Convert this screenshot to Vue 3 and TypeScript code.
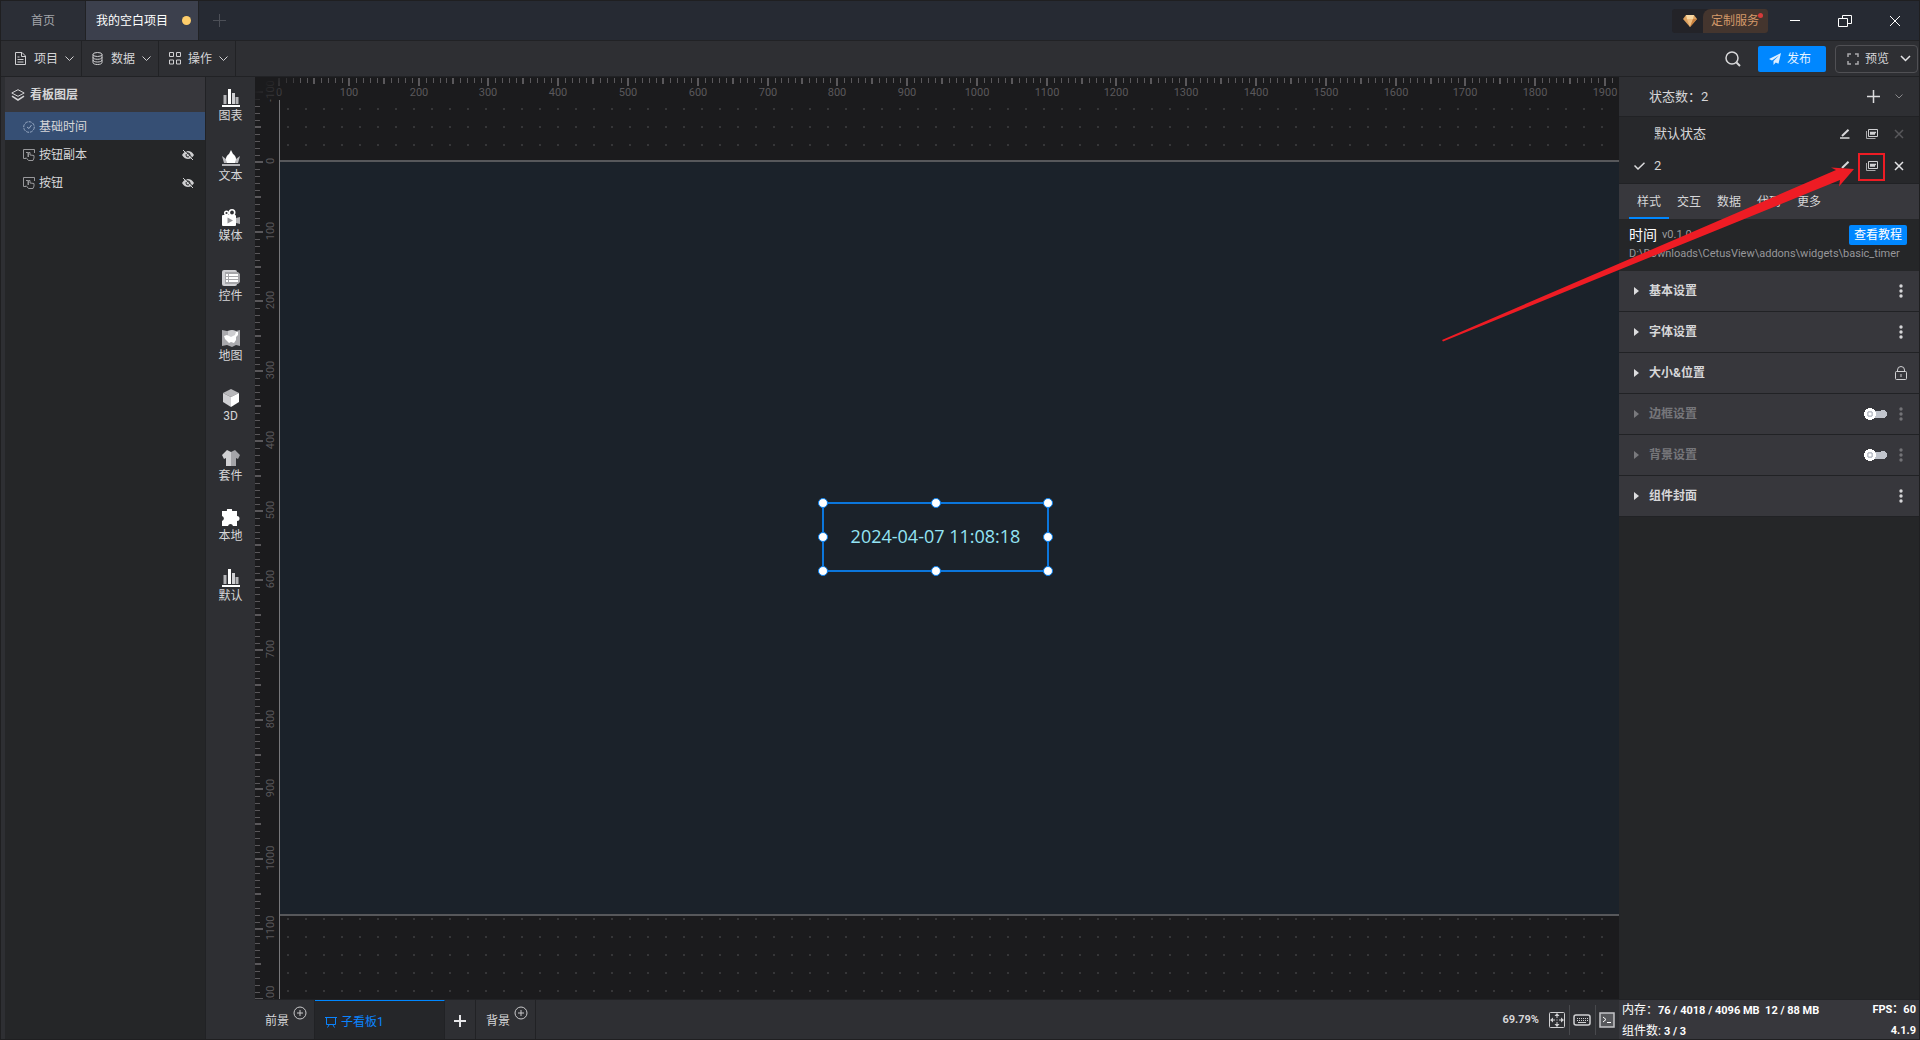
<script setup lang="ts">
import { ref } from 'vue'

interface Layer { name: string; icon: 'clock' | 'button'; hidden: boolean }
interface Tick { pos: number; value: number; level: number }
interface Section { title: string; off: boolean; toggle: boolean; lock: boolean }

function makeTicks(origin: number, scale: number, from: number, to: number): Tick[] {
  const list: Tick[] = []
  for (let v = from; v <= to; v += 10) {
    list.push({
      pos: Math.round(origin + v * scale),
      value: v,
      level: v % 100 === 0 ? 2 : v % 50 === 0 ? 1 : 0,
    })
  }
  return list
}

const xTicks = makeTicks(24, 0.6979, 0, 1920)
const yTicks = makeTicks(85, 0.6972, -100, 1200)
const tickLength = [5, 6, 8]
const tickWidth = [1, 2, 2]

const menus = ['项目', '数据', '操作']
const layers: Layer[] = [
  { name: '基础时间', icon: 'clock', hidden: false },
  { name: '按钮副本', icon: 'button', hidden: true },
  { name: '按钮', icon: 'button', hidden: true },
]
const tools = [
  { name: '图表', icon: 'chart' },
  { name: '文本', icon: 'crown' },
  { name: '媒体', icon: 'media' },
  { name: '控件', icon: 'control' },
  { name: '地图', icon: 'map' },
  { name: '3D', icon: 'cube' },
  { name: '套件', icon: 'shirt' },
  { name: '本地', icon: 'puzzle' },
  { name: '默认', icon: 'chart' },
]
const states = [
  { name: '默认状态', current: false },
  { name: '2', current: true },
]
const tabs = ['样式', '交互', '数据', '代码', '更多']
const activeTab = ref(0)
const sections: Section[] = [
  { title: '基本设置', off: false, toggle: false, lock: false },
  { title: '字体设置', off: false, toggle: false, lock: false },
  { title: '大小&位置', off: false, toggle: false, lock: true },
  { title: '边框设置', off: true, toggle: true, lock: false },
  { title: '背景设置', off: true, toggle: true, lock: false },
  { title: '组件封面', off: false, toggle: false, lock: false },
]
const handles = ['nw', 'n', 'ne', 'w', 'e', 'sw', 's', 'se']
</script>

<template>
  <div class="app">
    <header class="titlebar">
      <nav class="pages">
        <button class="page">首页</button>
        <button class="page current">我的空白项目<i class="unsaved"></i></button>
        <button class="new-page" aria-label="新建">
          <svg width="13" height="13"><path d="M6.500 0v13M0 6.500h13" stroke="#4c4f57" fill="none" /></svg>
        </button>
      </nav>
      <div class="window-tools">
        <button class="service">
          <span class="gem">
            <svg width="16" height="14" viewBox="0 0 16 14">
              <path d="M4 1h8l3 4-7 8-7-8z" fill="#dda15f" />
              <path d="M4 1h8l-1 4H5z" fill="#f8d7a2" />
              <path d="M5 5h6l-3 8z" fill="#efbd80" />
              <path d="M11 5h4l-7 8z" fill="#c7803f" />
            </svg>
          </span>
          <span class="service-text">定制服务</span>
          <i class="alert"></i>
        </button>
        <button class="win" aria-label="最小化"><svg width="16" height="16"><path d="M3 7.500h10" stroke="#fff" /></svg></button>
        <button class="win" aria-label="还原">
          <svg width="16" height="16" fill="none" stroke="#fff"><path d="M1.500 5.500h9v8h-9zM5.500 5V2.500h9v8h-4" /></svg>
        </button>
        <button class="win" aria-label="关闭"><svg width="16" height="16"><path d="M3 3l10 10M13 3L3 13" stroke="#fff" /></svg></button>
      </div>
    </header>

    <div class="toolbar">
      <button v-for="(m, i) in menus" :key="m" class="menu">
        <svg width="13" height="13" viewBox="0 0 13 13" fill="none" stroke="#d0d0d2">
          <path v-if="i === 0" d="M1.500 .5h6.500l3.500 3.500v8.500h-10zM7.500 .5v4h4M3.500 5h2M3.500 7.500h6M3.500 10h6" />
          <template v-else-if="i === 1">
            <ellipse cx="6.500" cy="2.500" rx="4.500" ry="2" />
            <path d="M2 2.500v8c0 1.200 2 2 4.500 2s4.500-.8 4.500-2v-8M2 5.300c0 1.200 2 2 4.500 2s4.500-.8 4.500-2M2 8c0 1.200 2 2 4.500 2s4.500-.8 4.500-2" />
          </template>
          <path v-else d="M1.500 .5h4v4h-4zM8.500 .5h4v4h-4zM1.500 8h4v4h-4zM8.500 8h4v4h-4z" />
        </svg>
        <span>{{ m }}</span>
        <svg width="9" height="6"><path d="M.5 .5l4 4 4-4" fill="none" stroke="#d0d0d2" /></svg>
      </button>
      <div class="actions">
        <button class="search" aria-label="搜索">
          <svg width="16" height="16" fill="none" stroke="#d8d8da" stroke-width="1.500"><circle cx="7" cy="7" r="6" /><path d="M11.500 11.500l3.500 3.500" stroke-width="2" /></svg>
        </button>
        <button class="publish">
          <svg width="12" height="12" viewBox="0 0 12 12"><path d="M12 0L0 6l3 1.400L10 2.500 4.500 8v4l2.200-2.600L9.500 10.700z" fill="#dceeff" /></svg>
          <span>发布</span>
        </button>
        <button class="preview">
          <svg width="12" height="12" fill="none" stroke="#a9a9ac" stroke-width="1.500"><path d="M1 4V1h3M8 1h3v3M11 8v3H8M4 11H1V8" /></svg>
          <span>预览</span>
          <svg width="11" height="7"><path d="M1 1l4.500 4.500L10 1" fill="none" stroke="#e4e4e6" stroke-width="1.500" /></svg>
        </button>
      </div>
    </div>

    <div class="body">
      <aside class="layers">
        <h2>
          <svg width="14" height="12" fill="none" stroke="#d4d4d6"><path d="M7 .7L.8 4 7 7.300 13.200 4z" /><path d="M1 7.200l6 3.800 6-3.800" stroke-width="1.500" /></svg>
          看板图层
        </h2>
        <ul>
          <li v-for="l in layers" :key="l.name" :class="{ selected: l.icon === 'clock' }">
            <svg v-if="l.icon === 'clock'" width="12" height="12" fill="none" stroke="#9aabc4"><circle cx="6" cy="6" r="5.300" stroke-dasharray="3 1" /><path d="M4 6l2 1.500L8.500 4" /></svg>
            <svg v-else width="12" height="12" fill="none" stroke="#98989b"><path d="M3 9.500H.5v-9h11V4M3 3.500h2v4.500M5.500 8V3.500h1.500V6l4 .5V9l-1 2.500H5.500L3 8.500" /></svg>
            <span>{{ l.name }}</span>
            <svg v-if="l.hidden" class="eye" width="12" height="12" viewBox="0 0 12 12"><path d="M0 6c2-3.500 4-4 6-4s4 .5 6 4c-2 3.500-4 4-6 4S2 9.500 0 6z" fill="#cfcfd1" /><circle cx="6" cy="6" r="2" fill="none" stroke="#252628" /><path d="M2.500 1l9 9" stroke="#252628" /><path d="M1 1l10 10" stroke="#cfcfd1" /></svg>
          </li>
        </ul>
      </aside>

      <nav class="tools">
        <button v-for="t in tools" :key="t.name" class="tool">
          <svg width="18" height="18" viewBox="0 0 18 18">
            <template v-if="t.icon === 'chart'">
              <path d="M1.500 6h3v9h-3zM13.500 8h3v7h-3z" fill="#b4b4b7" /><path d="M6 0h3v15H6z" fill="#fff" /><path d="M10 4h3v11h-3z" fill="#d0d0d3" /><path d="M0 16h18v2H0z" fill="#fff" />
            </template>
            <template v-else-if="t.icon === 'crown'">
              <path d="M0 7l4 3 1 4H2zM18 7l-4 3-1 4h3z" fill="#bdbdc0" /><path d="M9 1l2 4c3 2 4 5 2 9H5C3 10 4 7 7 5z" fill="#fff" /><path d="M0 15h18v2H0z" fill="#b4b4b7" />
            </template>
            <template v-else-if="t.icon === 'media'">
              <circle cx="4.500" cy="4" r="1.800" fill="none" stroke="#fff" stroke-width="1.500" /><circle cx="10" cy="3.500" r="2.700" fill="none" stroke="#fff" stroke-width="1.600" /><rect y="6" width="14" height="11" rx="1" fill="#fff" /><path d="M14 9l4-1v7l-4-1z" fill="#b4b4b7" /><path d="M5.500 8.500l5.500 3-5.500 3z" fill="#929295" />
            </template>
            <template v-else-if="t.icon === 'control'">
              <rect y="1" width="15" height="16" rx="2" fill="#cfcfd2" /><path d="M3 3h13l2 2v8l-2 2H3z" fill="#a7a7aa" /><path d="M4 5h2v2H4zM7 5h9v2H7zM4 8h2v2H4zM7 8h9v2H7zM4 11h2v2H4zM7 11h9v2H7z" fill="#fff" />
            </template>
            <template v-else-if="t.icon === 'map'">
              <path d="M0 1l5 1 5-1 4 1 4-1v16l-4-1-4 2-5-2-5 1z" fill="#a9a9ad" /><path d="M6 2l4-1 4 1v6H6z" fill="#cdcdd0" /><path d="M2 7l3-1 4 2 4-2 1-3 2 0v3l-2 2v3l-2 3-3-1-2 1-4-4z" fill="#fff" />
            </template>
            <template v-else-if="t.icon === 'cube'">
              <path d="M9 0l8 4-8 4-8-4z" fill="#b7b7ba" /><path d="M1 4l8 4v10l-8-5z" fill="#d0d0d3" /><path d="M17 4L9 8v10l8-5z" fill="#fff" />
            </template>
            <template v-else-if="t.icon === 'shirt'">
              <path d="M5 1l4 2v14H4V9L2 10 0 6z" fill="#d0d0d3" /><path d="M13 1L9 3v14h5V9l2 1 2-4z" fill="#a4a4a8" />
            </template>
            <path v-else d="M0 2h5a2.600 2.600 0 1 1 5 0h5v5a2.500 2.500 0 1 1 0 5v5h-4a2.600 2.600 0 0 0-5 0H0v-5a2.600 2.600 0 0 0 0-5z" fill="#fff" />
          </svg>
          <span>{{ t.name }}</span>
        </button>
      </nav>

      <main class="center">
        <div class="workspace">
          <svg class="ruler-x">
            <template v-for="t in xTicks" :key="t.value">
              <rect :x="t.level ? t.pos - 1 : t.pos" y="1" :width="tickWidth[t.level]" :height="tickLength[t.level]" />
              <text v-if="t.level === 2" :x="t.pos" y="19">{{ t.value }}</text>
            </template>
          </svg>
          <svg class="ruler-y">
            <template v-for="t in yTicks" :key="t.value">
              <rect x="0" :y="t.level ? t.pos - 1 : t.pos" :width="tickLength[t.level]" :height="tickWidth[t.level]" />
              <text v-if="t.level === 2" :transform="`translate(19 ${t.pos - 1}) rotate(-90)`">{{ t.value }}</text>
            </template>
          </svg>
          <div class="corner"></div>
          <div class="viewport">
            <div class="stage">
              <div class="widget">
                <span>2024-04-07 11:08:18</span>
                <i v-for="h in handles" :key="h" class="handle" :class="h"></i>
              </div>
            </div>
          </div>
        </div>

        <footer class="boards">
          <button class="board">前景
            <svg class="add" width="14" height="14" fill="none" stroke="#c9c9cb"><circle cx="7" cy="7" r="6" /><path d="M4 7h6M7 4v6" /></svg>
          </button>
          <button class="board active">
            <svg width="12" height="12" fill="none" stroke="#0a84ff"><path d="M0 1.500h12M1.500 1.500v7h9v-7M4 9l-1.500 2.500M8 9l1.500 2.500" /></svg>
            子看板1
          </button>
          <button class="board plus" aria-label="新建看板"><svg width="12" height="12"><path d="M6 0v12M0 6h12" stroke="#e6e6e8" stroke-width="2" /></svg></button>
          <button class="board">背景
            <svg class="add" width="14" height="14" fill="none" stroke="#c9c9cb"><circle cx="7" cy="7" r="6" /><path d="M4 7h6M7 4v6" /></svg>
          </button>
          <div class="view-tools">
            <span>69.79%</span>
            <button aria-label="适应画布">
              <svg width="16" height="16" fill="none" stroke="#d0d0d2"><rect x=".5" y=".5" width="15" height="15" rx="1" /><path d="M8 2v4M8 10v4M2 8h4M10 8h4M7.500 8h1" /><path d="M8 1l2.500 3h-5zM8 15l2.500-3h-5zM1 8l3-2.500v5zM15 8l-3-2.500v5z" fill="#d0d0d2" stroke="none" /></svg>
            </button>
            <button aria-label="快捷键">
              <svg width="18" height="12" fill="none" stroke="#d0d0d2"><rect x="1" y="1" width="16" height="10" rx="2" stroke-width="1.500" /><path d="M4 4.500h11M4 6.500h11" stroke-dasharray="1 1" /><path d="M5 8.500h8" /></svg>
            </button>
            <button aria-label="控制台">
              <svg width="16" height="16" fill="none" stroke="#c4c4c7"><rect x="1" y="1" width="14" height="14" fill="#57585c" stroke-width="1.500" /><path d="M4 5l3 2.500L4 10M8 10.500h4" stroke="#fff" /></svg>
            </button>
          </div>
        </footer>
      </main>

      <aside class="inspector">
        <div class="state-head">
          <span>状态数：2</span>
          <button aria-label="添加状态"><svg width="13" height="13"><path d="M6.500 0v13M0 6.500h13" stroke="#dcdcde" stroke-width="1.500" /></svg></button>
          <button aria-label="收起"><svg width="8" height="5"><path d="M.5 .5L4 4 7.500 .5" fill="none" stroke="#88888b" /></svg></button>
        </div>
        <ul class="states">
          <li v-for="s in states" :key="s.name">
            <svg class="tick" width="11" height="8"><path v-if="s.current" d="M.5 3.500l3.500 3.500L10.500 .8" fill="none" stroke="#dcdcde" stroke-width="1.500" /></svg>
            <span>{{ s.name }}</span>
            <button aria-label="重命名"><svg width="10" height="10" fill="none" stroke="#d8d8da"><path d="M2 7L8.500 .8" stroke-width="2" /><path d="M0 9h9.500" stroke-width="1.500" /></svg></button>
            <button aria-label="复制"><svg width="12" height="10" fill="none" stroke="#d0d0d2"><path d="M2.500 .5h9v7h-9z" /><path d="M.5 2v7.500h9" stroke="#a8a8ab" /><path d="M4 3.500h6M4 5h5" stroke-width="1.500" /></svg></button>
            <button aria-label="删除"><svg width="10" height="10" fill="none" :stroke="s.current ? '#e4e4e6' : '#58585b'" stroke-width="1.500"><path d="M1 1l8 8M9 1L1 9" /></svg></button>
          </li>
        </ul>
        <nav class="tabs">
          <button v-for="(t, i) in tabs" :key="t" :class="{ on: activeTab === i }" @click="activeTab = i">{{ t }}</button>
        </nav>
        <div class="info">
          <div class="info-line">
            <strong>时间</strong>
            <small>v0.1.0</small>
            <a href="#tutorial">查看教程</a>
          </div>
          <p>D:\Downloads\CetusView\addons\widgets\basic_timer</p>
        </div>
        <section v-for="s in sections" :key="s.title" class="section" :class="{ off: s.off }">
          <button class="fold">{{ s.title }}</button>
          <input v-if="s.toggle" type="checkbox" class="switch" :aria-label="s.title" />
          <svg v-if="s.lock" width="14" height="14" fill="none" stroke="#d0d0d2"><rect x="1.500" y="5.500" width="11" height="8" rx="1" /><path d="M3.500 5.500V4a3.500 3.500 0 0 1 7 0v1.500M7 8v3" /></svg>
          <svg v-else class="dots" width="4" height="14"><circle cx="2" cy="2" r="1.700" /><circle cx="2" cy="7" r="1.700" /><circle cx="2" cy="12" r="1.700" /></svg>
        </section>
        <footer class="status">
          <div><span>内存：<b>76 / 4018 / 4096 MB&nbsp; 12 / 88 MB</b></span><b>FPS：60</b></div>
          <div><span>组件数: <b>3 / 3</b></span><b>4.1.9</b></div>
        </footer>
      </aside>
    </div>

    <svg class="pointer" width="480" height="350" viewBox="0 0 480 350">
      <path d="M2 340L396 170 391 167.500 414 169 399 186.500 400 180 3 341.500z" fill="#ee1c24" />
      <rect x="419" y="154" width="25" height="26" fill="none" stroke="#ee1c24" stroke-width="2" />
    </svg>
  </div>
</template>

<style>
body {
  margin: 0;
  background: #1e1e20;
}
</style>

<style scoped>
.app {
  --line: #212225;
  position: relative;
  display: flex;
  flex-direction: column;
  box-sizing: border-box;
  height: 100vh;
  border: 1px solid #1f1f21;
  background: #2e2f33;
  color: #d6d6d8;
  font: 12px/16px Roboto, 'Noto Sans CJK SC', sans-serif;
  overflow: hidden;
}
button {
  display: flex;
  align-items: center;
  padding: 0;
  border: 0;
  background: none;
  color: inherit;
  font: inherit;
  white-space: nowrap;
}
ul {
  margin: 0;
  padding: 0;
  list-style: none;
}
svg {
  display: block;
  flex: none;
}

.titlebar {
  display: flex;
  justify-content: space-between;
  flex: none;
  height: 39px;
  border-bottom: 1px solid var(--line);
  background: #262a33;
}
.pages { display: flex; }
.page {
  padding: 0 30px;
  border-right: 1px solid var(--line);
  background: #2b2e36;
  color: #a3a5aa;
}
.page.current {
  padding: 0 7px 0 10px;
  background: #3c404d;
  color: #fff;
}
.unsaved {
  width: 9px;
  height: 9px;
  margin: 0 0 0 14px;
  border-radius: 50%;
  background: #ffce6b;
}
.new-page { margin-left: 14px; }
.window-tools {
  display: flex;
  align-items: center;
  gap: 34px;
  padding-right: 16px;
}
.service {
  position: relative;
  height: 24px;
  margin-right: -15px;
  border-radius: 3px;
  background: #232328;
  color: #d4996a;
}
.gem { width: 31px; padding-left: 10px; box-sizing: border-box; }
.service-text {
  padding: 4px 9px 4px 8px;
  border-radius: 8px 3px 3px 0;
  background: #44352e;
}
.alert {
  position: absolute;
  top: 4px;
  right: 5px;
  width: 5px;
  height: 5px;
  border-radius: 50%;
  background: #d63a3a;
}

.toolbar {
  display: flex;
  flex: none;
  height: 35px;
  padding-left: 4px;
  border-bottom: 1px solid var(--line);
}
.menu {
  gap: 7px;
  width: 77px;
  box-sizing: border-box;
  padding-left: 9px;
  border-right: 1px solid var(--line);
}
.actions {
  display: flex;
  align-items: center;
  margin-left: auto;
  padding-right: 1px;
}
.search { margin-right: 17px; }
.publish {
  gap: 6px;
  height: 26px;
  margin-right: 9px;
  padding: 0 15px 0 11px;
  border-radius: 2px;
  background: #0087ff;
  color: #e6f3ff;
}
.preview {
  gap: 6px;
  height: 28px;
  padding: 0 6px 0 11px;
  border: 1px solid #505054;
  border-radius: 4px;
}
.preview span { margin-right: 5px; }

.body {
  display: flex;
  flex: 1;
  min-height: 0;
  padding-left: 4px;
}
.layers {
  flex: none;
  width: 200px;
  border-right: 1px solid var(--line);
  background: #252628;
}
.layers h2 {
  display: flex;
  align-items: center;
  gap: 5px;
  height: 35px;
  margin: 0;
  padding-left: 6px;
  background: #37373c;
  font-size: 12px;
}
.layers li {
  display: flex;
  align-items: center;
  gap: 4px;
  height: 26px;
  padding: 2px 11px 0 18px;
}
.layers li.selected { background: #364f74; }
.eye { margin-left: auto; }

.tools {
  flex: none;
  width: 49px;
}
.tool {
  flex-direction: column;
  width: 100%;
  height: 60px;
  padding-top: 12px;
  gap: 1px;
}

.center {
  display: flex;
  flex: 1;
  flex-direction: column;
  min-width: 0;
}
.workspace {
  display: grid;
  flex: 1;
  grid-template: 23px minmax(0, 1fr) / 24px minmax(0, 1fr);
  min-height: 0;
  background: #1b1b1d;
  overflow: hidden;
}
.ruler-x,
.ruler-y {
  width: 100%;
  height: 100%;
  fill: #5a585b;
  font-size: 11px;
  text-anchor: middle;
  overflow: hidden;
}
.ruler-x { grid-area: 1 / 1 / 2 / 3; }
.ruler-y { grid-area: 1 / 1 / 3 / 2; }
.corner {
  z-index: 1;
  grid-area: 1 / 1;
  width: 44px;
  height: 23px;
  background: linear-gradient(135deg, #1b1b1d 20%, #1b1b1d00);
}
.viewport {
  grid-area: 2 / 2;
  padding-top: 60px;
  border-left: 1px solid #77777a;
  background: radial-gradient(circle, #363638 1px, #36363800 1px) -1px 0 / 18px 18px;
  overflow: hidden;
}
.stage {
  position: relative;
  height: 752px;
  border: solid #57585b;
  border-width: 2px 0;
  background: #1b222a;
}
.widget {
  position: absolute;
  top: 340px;
  left: 542px;
  display: flex;
  align-items: center;
  justify-content: center;
  box-sizing: border-box;
  width: 227px;
  height: 70px;
  padding-bottom: 2px;
  border: 2px solid #0b76dc;
  color: #94e4f4;
  font: 18px/24px 'Open Sans', sans-serif;
}
.handle {
  position: absolute;
  width: 8px;
  height: 8px;
  margin: -6px;
  border: 1px solid #0b82f0;
  border-radius: 50%;
  background: #fff;
}
.n, .nw, .ne { top: 0; }
.s, .sw, .se { top: 100%; margin-top: -4px; }
.w, .e { top: 50%; margin-top: -5px; }
.w, .nw, .sw { left: 0; }
.e, .ne, .se { left: 100%; margin-left: -4px; }
.n, .s { left: 50%; margin-left: -5px; }

.boards {
  display: flex;
  flex: none;
  height: 39px;
  border-top: 1px solid var(--line);
}
.board {
  gap: 4px;
  box-sizing: border-box;
  padding: 3px 7px 0 10px;
  border-right: 1px solid var(--line);
}
.board.active {
  width: 130px;
  border-top: 1px solid #0087ff;
  background: #252629;
  color: #0a84ff;
}
.board.plus { padding: 2px 9px 0; }
.add { margin-bottom: 16px; }
.view-tools {
  display: flex;
  align-items: center;
  gap: 3px;
  margin-left: auto;
}
.view-tools span {
  margin-right: 7px;
  font-size: 11px;
  font-weight: bold;
}
.view-tools button {
  height: 30px;
  padding-right: 4px;
  border-right: 1px solid #48494d;
}
.view-tools button:last-child { border: 0; }

.inspector {
  display: flex;
  flex: none;
  flex-direction: column;
  width: 300px;
  box-sizing: border-box;
  background: #252628;
}
.state-head {
  display: flex;
  align-items: center;
  height: 39px;
  padding: 0 16px 0 30px;
  border-bottom: 1px solid var(--line);
  background: #2e2f33;
  font-size: 13px;
  gap: 15px;
}
.state-head span { margin-right: auto; }
.states {
  padding: 1px 14px 1px 15px;
  border-bottom: 1px solid var(--line);
  background: #27282b;
  font-size: 13px;
}
.states li {
  display: flex;
  align-items: center;
  height: 32px;
  gap: 15px;
}
.states li span { margin: 0 auto 0 -6px; }
.states li button {
  justify-content: center;
  width: 12px;
}
.tabs {
  display: flex;
  height: 35px;
  padding-left: 10px;
  background: #38383d;
}
.tabs button {
  justify-content: center;
  width: 40px;
  box-sizing: border-box;
  border: solid transparent;
  border-width: 2px 0;
}
.tabs button.on { border-bottom-color: #0087ff; }
.info {
  height: 46px;
  padding: 6px 12px 0 10px;
}
.info-line {
  display: flex;
  align-items: center;
  gap: 5px;
  height: 20px;
}
.info strong {
  color: #fff;
  font-size: 14px;
  font-weight: normal;
}
.info small {
  color: #9b9b9e;
  font-size: 11px;
}
.info a {
  margin-left: auto;
  padding: 2px 5px;
  border-radius: 2px;
  background: #0087ff;
  color: #fff;
  text-decoration: none;
}
.info p {
  margin: 1px 0 0;
  color: #97979a;
  font-size: 11px;
  white-space: nowrap;
}
.section {
  display: flex;
  align-items: center;
  height: 40px;
  padding: 0 11px 0 15px;
  border-bottom: 1px solid var(--line);
  background: #37373c;
}
.fold {
  flex: 1;
  gap: 10px;
  font-weight: bold;
}
.fold::before {
  content: '';
  border: 4px solid transparent;
  border-right-width: 0;
  border-left: 5px solid #dcdcde;
}
.dots {
  margin: 0 5px 0 12px;
  fill: #d6d6d8;
}
.off .fold { opacity: .4; }
.off .dots { fill: #737377; }
.switch {
  width: 23px;
  height: 12px;
  margin: 0;
  appearance: none;
  background:
    radial-gradient(circle at 6px 6px, #fff 1px, #c0c4cc 2px, #c0c4cc 3px, #fff 3px, #fff 6px, transparent 6px),
    linear-gradient(#c0c4cc, #c0c4cc) 8px 3px / 12px 7px no-repeat,
    radial-gradient(circle at 19px 6px, #c0c4cc 4px, transparent 4px);
}
.status {
  height: 40px;
  box-sizing: border-box;
  margin-top: auto;
  padding: 0 3px;
  border-top: 1px solid var(--line);
  background: #37373c;
  color: #fff;
  line-height: 20px;
}
.status div {
  display: flex;
  justify-content: space-between;
}
.status b { font-size: 11px; }

.pointer {
  position: absolute;
  top: -1px;
  right: -1px;
  pointer-events: none;
}
</style>
